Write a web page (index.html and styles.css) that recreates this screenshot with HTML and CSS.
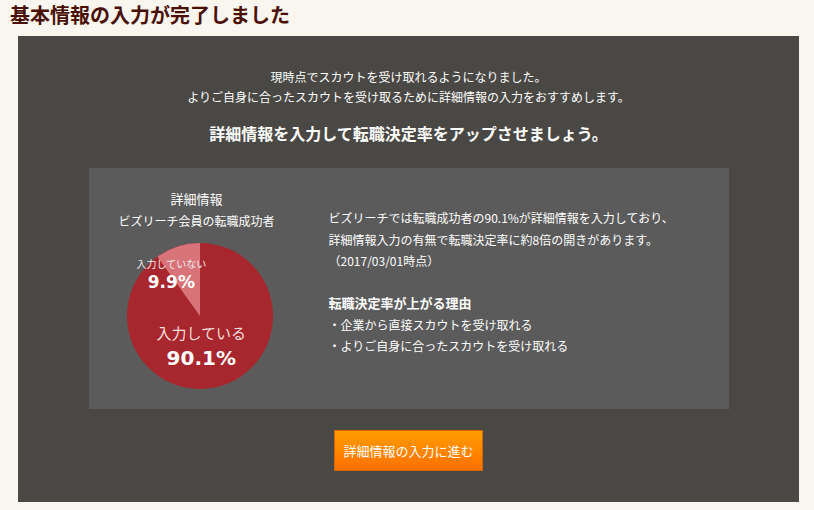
FILE: index.html
```html
<!DOCTYPE html>
<html lang="ja">
<head>
    <meta charset="UTF-8">
    <link rel="stylesheet" href="styles.css">
</head>
<body>
    <h1 class="page-title">基本情報の入力が完了しました</h1>

    <div class="complete-panel">
        <p class="lead">現時点でスカウトを受け取れるようになりました。<br>よりご自身に合ったスカウトを受け取るために詳細情報の入力をおすすめします。</p>
        <p class="catch">詳細情報を入力して転職決定率をアップさせましょう。</p>

        <div class="info-box">
            <!-- 円グラフ -->
            <div class="chart-col">
                <div class="chart-title">詳細情報</div>
                <div class="chart-sub">ビズリーチ会員の転職成功者</div>
                <div class="pie">
                    <svg width="146" height="146" viewBox="0 0 146 146">
                        <circle cx="73" cy="73" r="73" fill="#a8262d"/>
                        <path d="M73,73 L73,0 A73,73 0 0 0 30.46,13.67 Z" fill="#d9737a"/>
                    </svg>
                    <div class="pie-label small">
                        <span class="pie-name">入力していない</span>
                        <span class="pie-num">9.9%</span>
                    </div>
                    <div class="pie-label large">
                        <span class="pie-name">入力している</span>
                        <span class="pie-num">90.1%</span>
                    </div>
                </div>
            </div>

            <!-- 説明 -->
            <div class="text-col">
                <p>ビズリーチでは転職成功者の90.1%が詳細情報を入力しており、<br>詳細情報入力の有無で転職決定率に約8倍の開きがあります。<br>（2017/03/01時点）</p>
                <h3 class="reason-title">転職決定率が上がる理由</h3>
                <ul class="reason-list">
                    <li>・企業から直接スカウトを受け取れる</li>
                    <li>・よりご自身に合ったスカウトを受け取れる</li>
                </ul>
            </div>
        </div>

        <button class="next-button">詳細情報の入力に進む</button>
    </div>
</body>
</html>
```

FILE: styles.css
```css
* {
    box-sizing: border-box;
    margin: 0;
    padding: 0;
}

body {
    background: #f9f6ef;
    font-family: "Noto Sans CJK JP", "Noto Sans", sans-serif;
    color: #fff;
    width: 814px;
}

.page-title {
    font-size: 20px;
    font-weight: bold;
    color: #4a1006;
    line-height: 26px;
    padding: 2px 10px 0;
    height: 36px;
}

.complete-panel {
    background: #4a4844;
    margin-left: 18px;
    width: 781px;
    height: 466px;
    padding-top: 31px;
    display: flex;
    flex-direction: column;
    align-items: center;
}

.lead {
    font-size: 12px;
    line-height: 20px;
    text-align: center;
}

.catch {
    font-size: 16px;
    font-weight: bold;
    line-height: 22px;
    margin-top: 15px;
}

.info-box {
    background: #5b5b5b;
    width: 640px;
    height: 241px;
    margin-top: 24px;
    display: flex;
}

.chart-col {
    width: 216px;
    padding-top: 20px;
    display: flex;
    flex-direction: column;
    align-items: center;
}

.chart-title {
    font-size: 13px;
    line-height: 22px;
}

.chart-sub {
    font-size: 12px;
    line-height: 22px;
}

.pie {
    position: relative;
    width: 146px;
    height: 146px;
    margin-top: 11px;
    margin-left: 6px;
}

.pie svg {
    display: block;
}

.pie-label {
    position: absolute;
    display: flex;
    flex-direction: column;
    align-items: center;
}

.pie-num {
    font-family: "DejaVu Sans", "Noto Sans", sans-serif;
    font-weight: bold;
}

.pie-label.small {
    left: 10px;
    top: 14px;
}

.pie-label.small .pie-name {
    font-size: 10px;
    line-height: 14px;
    color: #eee;
}

.pie-label.small .pie-num {
    font-size: 17px;
    line-height: 22px;
}

.pie-label.large {
    left: 30px;
    top: 79px;
}

.pie-label.large .pie-name {
    font-size: 15px;
    line-height: 22px;
    color: #f3dede;
}

.pie-label.large .pie-num {
    font-size: 20px;
    line-height: 28px;
}

.text-col {
    padding-top: 39px;
    padding-left: 24px;
    font-size: 12px;
    line-height: 21.5px;
}

.reason-title {
    font-size: 13px;
    font-weight: bold;
    line-height: 22px;
    margin-top: 20px;
}

.reason-list {
    list-style: none;
}

.next-button {
    margin-top: 21px;
    width: 149px;
    height: 41px;
    background: linear-gradient(#ff9d00, #ff7000);
    border: 1px solid #d96500;
    color: #fff;
    font-family: "Noto Sans CJK JP", sans-serif;
    font-size: 13px;
    cursor: pointer;
}
```
